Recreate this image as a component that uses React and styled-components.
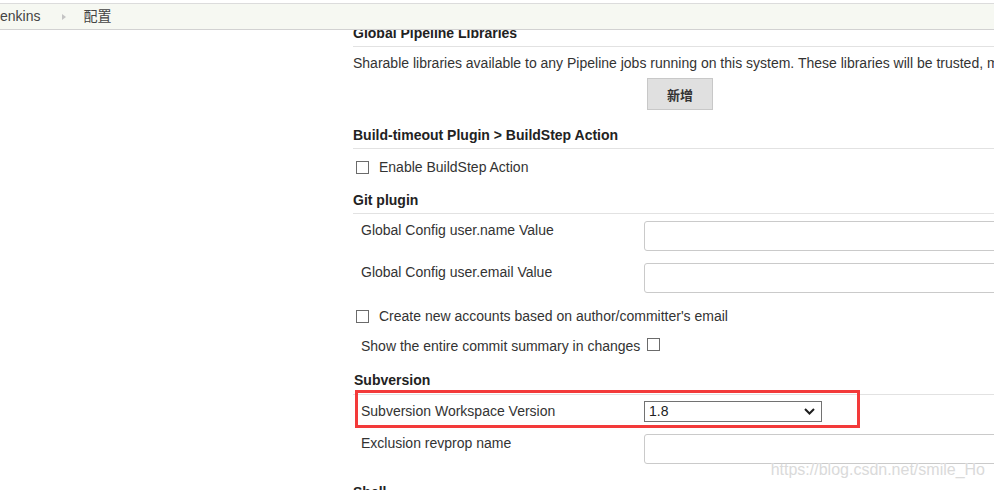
import React from 'react';
import styled, { createGlobalStyle } from 'styled-components';

const GlobalStyle = createGlobalStyle`
  html, body {
    margin: 0;
    padding: 0;
    background: #fff;
    overflow: hidden;
  }
  body {
    font-family: "Liberation Sans", Arial, "Noto Sans CJK SC", sans-serif;
    font-size: 14px;
    color: #333;
  }
`;

const Page = styled.div`
  position: relative;
  width: 994px;
  height: 490px;
  padding-top: 3px;
  box-sizing: border-box;
  overflow: hidden;
`;

const Breadcrumbs = styled.div`
  position: relative;
  z-index: 2;
  display: flex;
  align-items: center;
  height: 25px;
  background: #f6f8f2;
  border-top: 1px solid #dcdcdc;
  border-bottom: 1px solid #d2d2d2;
  font-size: 14px;
  color: #444;
  white-space: nowrap;
`;

const Crumb = styled.span`
  margin-left: ${p => p.$offset}px;
  line-height: 17px;
`;

const CrumbArrow = styled.span`
  margin-left: 22px;
  width: 0;
  height: 0;
  border-left: 4px solid #c4c4c4;
  border-top: 3.5px solid transparent;
  border-bottom: 3.5px solid transparent;
`;

const Main = styled.div`
  margin-left: 353px;
  margin-top: -5px;
  width: 1000px;
`;

const SectionHeader = styled.div`
  margin-top: ${p => p.$top || 0}px;
  padding-bottom: ${p => p.$pad || 4}px;
  padding-left: ${p => p.$indent || 0}px;
  border-bottom: 1px solid #e2e2e2;
  font-weight: bold;
  line-height: 17px;
  color: #222;
`;

const Description = styled.div`
  margin-top: 8px;
  line-height: 17px;
  white-space: nowrap;
`;

const AddButton = styled.button`
  display: block;
  margin: 6px 0 0 294px;
  width: 66px;
  height: 32px;
  background: #e0e0e0;
  border: 1px solid #c8c8c8;
  border-radius: 0;
  font-family: "Noto Sans CJK SC", "Liberation Sans", sans-serif;
  font-size: 13px;
  font-weight: bold;
  color: #333;
  padding: 0;
`;

const CheckRow = styled.div`
  display: flex;
  align-items: center;
  height: ${p => p.$height}px;
  padding-left: 3px;
  padding-top: 2px;
  box-sizing: border-box;
  white-space: nowrap;
`;

const Box = styled.span`
  display: inline-block;
  width: 13px;
  height: 13px;
  box-sizing: border-box;
  border: 1px solid #6b6b6b;
  background: #fff;
  margin-right: ${p => p.$gap || 0}px;
  margin-left: ${p => p.$left || 0}px;
`;

const FieldRow = styled.div`
  position: relative;
  display: grid;
  grid-template-columns: 291px 1fr;
  align-items: start;
  height: ${p => p.$height}px;
  padding-top: ${p => p.$pad}px;
  box-sizing: border-box;
`;

const Label = styled.div`
  padding-left: 8px;
  padding-top: ${p => p.$pad}px;
  line-height: 17px;
  white-space: nowrap;
`;

const TextInput = styled.div`
  width: 420px;
  height: 30px;
  box-sizing: border-box;
  border: 1px solid #cacaca;
  border-radius: 3px;
  background: #fff;
`;

const Select = styled.div`
  display: flex;
  align-items: center;
  justify-content: space-between;
  width: 178px;
  height: 21px;
  box-sizing: border-box;
  border: 1px solid #727272;
  padding: 0 6px 0 4px;
  background: #fff;
  color: #222;
  line-height: 17px;
`;

const Highlight = styled.div`
  position: absolute;
  top: -5px;
  left: 2px;
  width: 505px;
  height: 38px;
  box-sizing: border-box;
  border: 3px solid #f33a3a;
  pointer-events: none;
`;

const Watermark = styled.div`
  position: absolute;
  right: 9px;
  top: 461px;
  font-size: 16px;
  line-height: 18px;
  color: #dadada;
  text-shadow: 0 0 1px #fff;
`;

const Chevron = () => (
  <svg width="11" height="7" viewBox="0 0 11 7">
    <path d="M1 1 L5.5 5.5 L10 1" fill="none" stroke="#1e1e1e" strokeWidth="2" />
  </svg>
);

export default function App() {
  return (
    <Page>
      <GlobalStyle />
      <Breadcrumbs>
        <Crumb $offset={-7}>Jenkins</Crumb>
        <CrumbArrow />
        <Crumb $offset={17}>配置</Crumb>
      </Breadcrumbs>
      <Main>
        <SectionHeader>Global Pipeline Libraries</SectionHeader>
        <Description>
          Sharable libraries available to any Pipeline jobs running on this system. These libraries will be trusted, meaning they run without “sandbox” restrictions and may use @Grab.
        </Description>
        <AddButton>新增</AddButton>

        <SectionHeader $top={17}>Build-timeout Plugin &gt; BuildStep Action</SectionHeader>
        <CheckRow $height={34}>
          <Box $gap={10} />
          Enable BuildStep Action
        </CheckRow>

        <SectionHeader $top={9}>Git plugin</SectionHeader>
        <FieldRow $height={42} $pad={7}>
          <Label $pad={1}>Global Config user.name Value</Label>
          <TextInput />
        </FieldRow>
        <FieldRow $height={42} $pad={7}>
          <Label $pad={1}>Global Config user.email Value</Label>
          <TextInput />
        </FieldRow>
        <CheckRow $height={34}>
          <Box $gap={10} />
          Create new accounts based on author/committer's email
        </CheckRow>
        <FieldRow $height={28} $pad={6}>
          <Label $pad={0}>Show the entire commit summary in changes</Label>
          <Box $left={3} />
        </FieldRow>

        <SectionHeader $top={12} $pad={5} $indent={1}>Subversion</SectionHeader>
        <FieldRow $height={32} $pad={6}>
          <Label $pad={2}>Subversion Workspace Version</Label>
          <Select>
            <span>1.8</span>
            <Chevron />
          </Select>
          <Highlight />
        </FieldRow>
        <FieldRow $height={42} $pad={7}>
          <Label $pad={1}>Exclusion revprop name</Label>
          <TextInput />
        </FieldRow>

        <SectionHeader $top={15}>Shell</SectionHeader>
      </Main>
      <Watermark>https://blog.csdn.net/smile_Ho</Watermark>
    </Page>
  );
}
